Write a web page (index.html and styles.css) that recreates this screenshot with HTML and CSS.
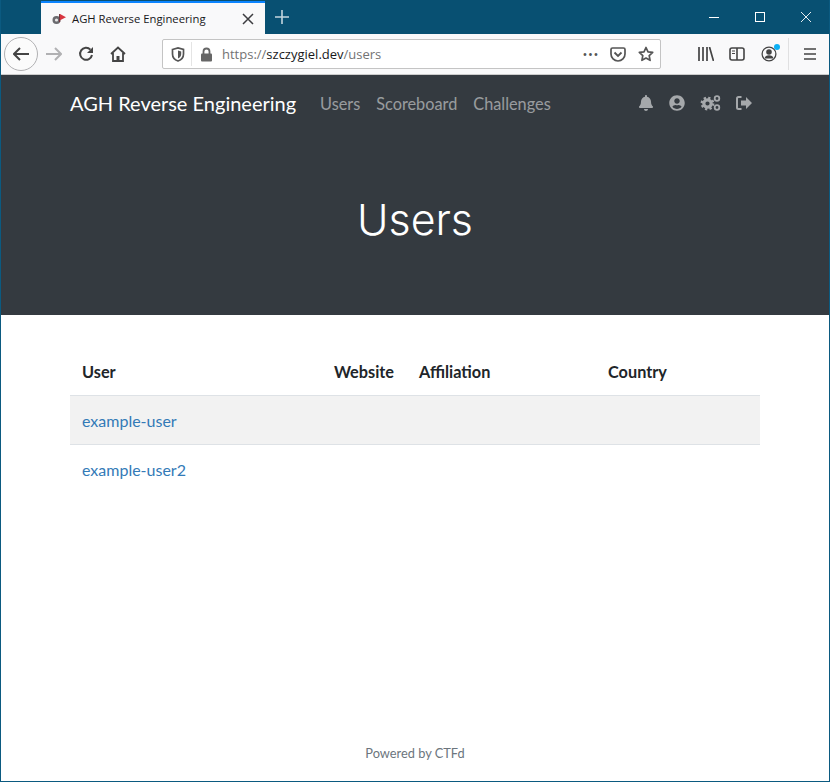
FILE: index.html
```html
<!DOCTYPE html>
<html lang="en">
  <head>
    <meta charset="UTF-8" />
    <title>Users - AGH Reverse Engineering</title>
    <link rel="stylesheet" href="styles.css">
  </head>
  <body>
    <div class="window">
      <div class="titlebar">
        <div class="tab">
          <svg class="favicon" width="16" height="16" viewBox="0 0 16 16">
            <circle cx="5.5" cy="9" r="4" fill="#6b6b6f" />
            <circle cx="5.5" cy="9" r="1.6" fill="#e8e8e8" />
            <rect x="8" y="3" width="1.2" height="8" fill="#77343c" />
            <path d="M9 3l6 3.2-6 3z" fill="#d8343f" />
          </svg>
          <span class="tab-title">AGH Reverse Engineering</span>
          <svg class="tab-close" width="12" height="12" viewBox="0 0 12 12">
            <path d="M1 1l10 10M11 1L1 11" stroke="#3d3d40" stroke-width="1.5" />
          </svg>
        </div>
        <svg class="new-tab" width="14" height="14" viewBox="0 0 14 14">
          <path d="M7 0v14M0 7h14" stroke="#c4d5de" stroke-width="1.6" />
        </svg>
        <div class="window-controls">
          <svg width="10" height="10" viewBox="0 0 10 10"><path d="M0 5.5h10" stroke="#fff" /></svg>
          <svg width="10" height="10" viewBox="0 0 10 10"><rect x=".5" y=".5" width="9" height="9" fill="none" stroke="#fff" /></svg>
          <svg width="10" height="10" viewBox="0 0 10 10"><path d="M0 0l10 10M10 0L0 10" stroke="#fff" stroke-width=".9" /></svg>
        </div>
      </div>

      <div class="toolbar">
        <div class="back-btn">
          <svg width="16" height="14" viewBox="0 0 16 14"><path d="M7 1L1 7l6 6M1 7h15" fill="none" stroke="#444" stroke-width="2" /></svg>
        </div>
        <svg class="tool forward" width="16" height="14" viewBox="0 0 16 14"><path d="M9 1l6 6-6 6M15 7H0" fill="none" stroke="#b1b1b3" stroke-width="2" /></svg>
        <svg class="tool reload" width="16" height="16" viewBox="0 0 16 16"><path d="M14 9a6 6 0 1 1-1.6-5.4" fill="none" stroke="#444" stroke-width="2" /><path d="M15 1v6H9z" fill="#444" /></svg>
        <svg class="tool home" width="16" height="16" viewBox="0 0 16 16"><path d="M1 8l7-6.5L15 8M3 7v8h10V7" fill="none" stroke="#444" stroke-width="1.8" /><rect x="6.5" y="10" width="3" height="5" fill="#444" /></svg>

        <div class="urlbar">
          <svg class="shield" width="14" height="15" viewBox="0 0 14 15"><path d="M1.5 2.5L7 1l5.5 1.5V7c0 3.500-2.500 6-5.500 7C4 13 1.500 10.500 1.500 7z" fill="none" stroke="#555" stroke-width="1.700" /><path d="M7 3.500l3.200 1V7c0 2-1.300 3.500-3.200 4.500z" fill="#555" /></svg>
          <span class="url-sep"></span>
          <svg class="lock" width="13" height="15" viewBox="0 0 13 15"><path d="M3.500 7V4.500a3 3 0 0 1 6 0V7" fill="none" stroke="#666" stroke-width="1.800" /><rect x="1" y="6.500" width="11" height="8" rx="1" fill="#666" /></svg>
          <span class="url"><span class="url-dim">https://</span>szczygiel.dev<span class="url-dim">/users</span></span>
          <span class="url-dots">•••</span>
          <svg class="pocket" width="16" height="15" viewBox="0 0 16 15"><path d="M1 2.500a1.500 1.500 0 0 1 1.500-1.500h11A1.500 1.500 0 0 1 15 2.500V7a7 7 0 0 1-14 0z" fill="none" stroke="#555" stroke-width="1.700" /><path d="M4.500 5.500L8 9l3.500-3.500" fill="none" stroke="#555" stroke-width="1.800" /></svg>
          <svg class="star" width="16" height="16" viewBox="0 0 16 16"><path d="M8 1.500l2 4.300 4.700.6-3.500 3.200.9 4.700L8 12l-4.100 2.300.9-4.700L1.300 6.400 6 5.800z" fill="none" stroke="#555" stroke-width="1.700" stroke-linejoin="round" /></svg>
        </div>

        <svg class="tool library" width="16" height="14" viewBox="0 0 16 14"><path d="M1 0v14M5 0v14M9 0v14M11.500 0l4 14" stroke="#444" stroke-width="1.700" fill="none" /></svg>
        <svg class="tool sidebar" width="16" height="14" viewBox="0 0 16 14"><rect x="1" y="1" width="14" height="12" rx="2" fill="none" stroke="#444" stroke-width="1.600" /><path d="M8 1v12" stroke="#444" stroke-width="1.600" /><path d="M3 4h3M3 6.500h3" stroke="#444" /></svg>
        <div class="account">
          <svg width="16" height="16" viewBox="0 0 16 16"><circle cx="8" cy="8" r="6.900" fill="none" stroke="#444" stroke-width="1.300" /><circle cx="8" cy="6" r="2.800" fill="#444" /><path d="M3.500 12.500c.5-2.500 2-3.300 4.500-3.300s4 .8 4.500 3.300z" fill="#444" /></svg>
          <span class="account-dot"></span>
        </div>
        <span class="tool-sep"></span>
        <svg class="tool menu" width="12" height="12" viewBox="0 0 12 12"><path d="M0 1h12M0 6h12M0 11h12" stroke="#444" stroke-width="1.700" /></svg>
      </div>

      <nav class="navbar">
        <a class="brand" href="#">AGH Reverse Engineering</a>
        <div class="nav-links">
          <a href="#">Users</a>
          <a href="#">Scoreboard</a>
          <a href="#">Challenges</a>
        </div>
        <div class="nav-icons">
          <svg width="16" height="16" viewBox="0 0 448 512"><path d="M224 512c35.320 0 63.970-28.650 63.970-64H160.030c0 35.350 28.650 64 63.970 64zm215.390-149.710c-19.320-20.760-55.470-51.990-55.470-154.290 0-77.700-54.480-139.900-127.940-155.160V32c0-17.670-14.320-32-31.980-32s-31.980 14.330-31.980 32v20.840C118.560 68.100 64.080 130.300 64.080 208c0 102.300-36.150 133.530-55.470 154.290-6 6.450-8.660 14.160-8.610 21.710.11 16.400 12.980 32 32.100 32h383.800c19.120 0 32-15.600 32.100-32 .05-7.550-2.610-15.270-8.610-21.710z" /></svg>
          <svg width="16" height="16" viewBox="0 0 496 512"><path d="M248 8C111 8 0 119 0 256s111 248 248 248 248-111 248-248S385 8 248 8zm0 96c48.600 0 88 39.400 88 88s-39.400 88-88 88-88-39.400-88-88 39.400-88 88-88zm0 344c-58.700 0-111.300-26.600-146.500-68.200 18.800-35.400 55.600-59.800 98.500-59.800 2.400 0 4.800.4 7.100 1.100 13 4.200 26.600 6.900 40.900 6.900 14.300 0 28-2.700 40.900-6.900 2.300-.7 4.700-1.100 7.100-1.100 42.900 0 79.700 24.400 98.500 59.800C359.300 421.400 306.700 448 248 448z" /></svg>
          <svg width="21" height="16" viewBox="0 0 21 16">
            <circle cx="7.500" cy="8.500" r="5.600" fill="none" stroke-width="2.600" stroke-dasharray="2.200 2.200" />
            <path fill-rule="evenodd" d="M7.500 3.200a5.300 5.300 0 1 1 0 10.600 5.300 5.300 0 0 1 0-10.600zm0 3.200a2.100 2.100 0 1 0 0 4.200 2.100 2.100 0 0 0 0-4.200z" />
            <circle cx="17" cy="3.500" r="2.300" fill="none" stroke-width="1.800" />
            <circle cx="17" cy="12.500" r="2.300" fill="none" stroke-width="1.800" />
          </svg>
          <svg width="16" height="14" viewBox="0 0 16 14"><path d="M5.500 1H2.500A1.500 1.500 0 0 0 1 2.500v9A1.500 1.500 0 0 0 2.500 13h3" fill="none" stroke-width="2" /><path d="M10 1l6 6-6 6V9.500H5v-5h5z" /></svg>
        </div>
      </nav>

      <header class="hero">
        <h1>Users</h1>
      </header>

      <main class="content">
        <table class="users-table">
          <colgroup>
            <col class="col-user" />
            <col class="col-website" />
            <col class="col-affiliation" />
            <col />
          </colgroup>
          <thead>
            <tr>
              <th>User</th>
              <th>Website</th>
              <th>Affiliation</th>
              <th>Country</th>
            </tr>
          </thead>
          <tbody>
            <tr class="striped">
              <td><a href="#">example-user</a></td>
              <td></td>
              <td></td>
              <td></td>
            </tr>
            <tr>
              <td><a href="#">example-user2</a></td>
              <td></td>
              <td></td>
              <td></td>
            </tr>
          </tbody>
        </table>
      </main>

      <footer class="footer">Powered by CTFd</footer>
    </div>
  </body>
</html>
```

FILE: styles.css
```css
html,
body {
  margin: 0;
  padding: 0;
}
body {
  font-family: Lato, "Liberation Sans", sans-serif;
  color: #212529;
  background-color: #fff;
}
a {
  text-decoration: none;
}
.window {
  box-sizing: border-box;
  width: 830px;
  height: 782px;
  border: 1px solid #0b5a80;
  border-top: none;
  display: flex;
  flex-direction: column;
  overflow: hidden;
}

/* browser chrome */
.titlebar {
  height: 34px;
  flex: none;
  background-color: #085072;
  display: flex;
  align-items: flex-end;
}
.tab {
  box-sizing: border-box;
  width: 224px;
  height: 33px;
  margin-left: 40px;
  background-color: #f9f9fa;
  border-top: 2px solid #0a84ff;
  display: flex;
  align-items: center;
  padding: 0 11px 0 10px;
  font-family: "Open Sans", sans-serif;
  font-size: 11.3px;
  color: #18181a;
}
.favicon {
  flex: none;
}
.tab-title {
  margin-left: 5px;
  flex: 1;
}
.new-tab {
  margin: 0 0 10px 10px;
}
.window-controls {
  margin-left: auto;
  display: flex;
  gap: 36px;
  padding: 0 18px 12px 0;
}
.toolbar {
  height: 41px;
  flex: none;
  box-sizing: border-box;
  background-color: #f9f9fa;
  border-bottom: 1px solid #ccc;
  display: flex;
  align-items: center;
  padding-left: 3px;
}
.back-btn {
  box-sizing: border-box;
  width: 34px;
  height: 34px;
  flex: none;
  border: 1px solid #b1b1b3;
  border-radius: 50%;
  background-color: #fbfbfb;
  display: flex;
  align-items: center;
  justify-content: center;
}
.tool {
  flex: none;
}
.forward {
  margin-left: 8px;
}
.reload {
  margin-left: 16px;
}
.home {
  margin-left: 16px;
}
.urlbar {
  box-sizing: border-box;
  width: 499px;
  height: 30px;
  margin-left: 36px;
  flex: none;
  background-color: #fff;
  border: 1px solid #c4c4c4;
  border-radius: 2px;
  display: flex;
  align-items: center;
  padding: 0 6px 0 8px;
  font-family: "Open Sans", sans-serif;
  font-size: 13px;
  color: #18181a;
}
.url-sep {
  width: 1px;
  height: 24px;
  margin: 0 8px 0 6px;
  background-color: #e4e4e4;
}
.url {
  margin-left: 9px;
  flex: 1;
}
.url-dim {
  color: #737373;
}
.url-dots {
  color: #555;
  font-size: 13px;
  letter-spacing: 0.6px;
}
.pocket {
  margin-left: 11px;
}
.star {
  margin-left: 12px;
}
.library {
  margin-left: 37px;
}
.sidebar {
  margin-left: 15px;
}
.account {
  margin-left: 16px;
  height: 16px;
  position: relative;
}
.account-dot {
  position: absolute;
  top: -2px;
  right: -3px;
  width: 6px;
  height: 6px;
  border-radius: 50%;
  background-color: #0cb0f5;
}
.tool-sep {
  width: 1px;
  height: 32px;
  margin-left: 11px;
  background-color: #e0e0e1;
}
.menu {
  margin-left: 15px;
}

/* site navbar */
.navbar {
  flex: none;
  box-sizing: border-box;
  height: 60px;
  background-color: #343a40;
  display: flex;
  align-items: center;
  padding: 0 69px 4px;
}
.brand {
  color: #fff;
  font-size: 20px;
  margin-right: 16px;
  padding-bottom: 1px;
}
.nav-links {
  display: flex;
  padding-left: 8px;
  gap: 16px;
}
.nav-links a {
  color: rgba(255, 255, 255, 0.5);
  font-size: 16.3px;
}
.nav-icons {
  margin-left: auto;
  display: flex;
  align-items: center;
  gap: 15px;
  padding: 0 8px 1px 0;
  fill: #a5a8ab;
  stroke: none;
}
.nav-icons svg [fill="none"] {
  stroke: #a5a8ab;
}
.hero {
  flex: none;
  height: 180px;
  background-color: #343a40;
  color: #fff;
  text-align: center;
}
.hero h1 {
  margin: 0;
  padding-top: 61px;
  font-family: Inter, sans-serif;
  font-weight: 300;
  font-size: 42.8px;
  line-height: 48px;
}

/* users table */
.content {
  flex: 1;
  padding: 34px 69px 0;
}
.users-table {
  width: 690px;
  table-layout: fixed;
  border-collapse: collapse;
  font-size: 16px;
}
.col-user {
  width: 252px;
}
.col-website {
  width: 85px;
}
.col-affiliation {
  width: 189px;
}
.users-table th {
  text-align: left;
  font-size: 16.3px;
  font-weight: 700;
  padding: 12px;
  line-height: 22px;
  border-bottom: 1px solid #dee2e6;
}
.users-table td {
  padding: 13px 12px 11px;
  line-height: 24px;
  border-bottom: 1px solid #dee2e6;
}
.users-table tbody tr:last-child td {
  border-bottom: none;
}
.users-table td a {
  color: #337ab7;
}
.striped {
  background-color: #f2f2f2;
}
.footer {
  flex: none;
  height: 36px;
  text-align: center;
  font-size: 12.8px;
  color: #6c757d;
}
```
